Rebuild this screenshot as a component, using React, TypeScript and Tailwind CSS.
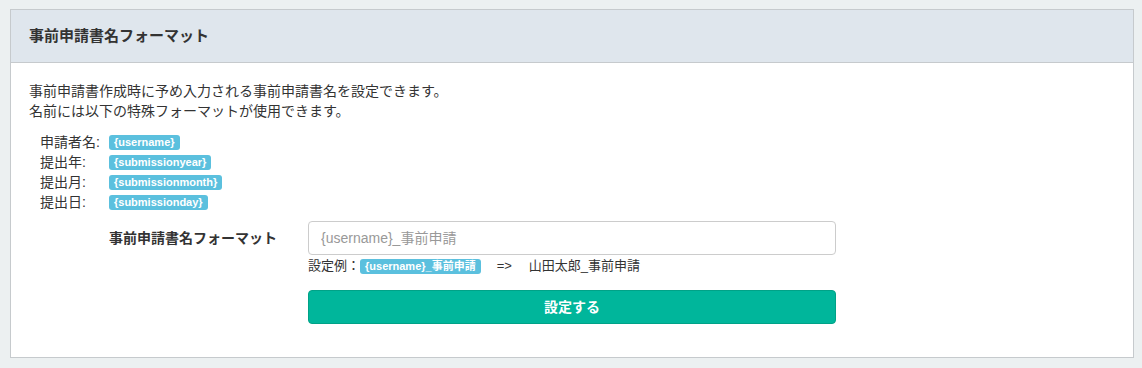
const font = "font-['Liberation_Sans','Noto_Sans_CJK_JP',sans-serif]";

const formats = [
  { label: "申請者名:", token: "{username}" },
  { label: "提出年:", token: "{submissionyear}" },
  { label: "提出月:", token: "{submissionmonth}" },
  { label: "提出日:", token: "{submissionday}" },
];

const Badge = ({ children }: { children: React.ReactNode }) => (
  <span className="inline-block rounded-[3px] bg-[#5bc0de] px-[5px] text-[11px] leading-[15px] font-bold text-white">
    {children}
  </span>
);

export default function App() {
  return (
    <div className={`${font} min-h-[368px] bg-[#ecf0f1] pt-[9px] pr-[8px] pb-[10px] pl-[10px] text-[14px] text-[#333]`}>
      <div className="border border-[#c6cacd] bg-white">
        {/* Header */}
        <div className="h-[53px] border-b border-[#c6cacd] bg-[#dfe6ed] px-[18px] flex items-center">
          <h2 className="text-[15px] font-bold text-[#333]">事前申請書名フォーマット</h2>
        </div>

        {/* Body */}
        <div className="px-[18px] pt-[18px] pb-[33px]">
          <p className="leading-[20px]">
            事前申請書作成時に予め入力される事前申請書名を設定できます。
            <br />
            名前には以下の特殊フォーマットが使用できます。
          </p>

          <div className="mt-[11px] pl-[11px]">
            {formats.map((f) => (
              <div key={f.token} className="flex items-center h-[20px]">
                <span className="w-[69px] text-[14px]">{f.label}</span>
                <Badge>{f.token}</Badge>
              </div>
            ))}
          </div>

          <div className="mt-[9px] flex">
            <label className="w-[279px] pr-[31px] pt-[7px] text-right text-[14px] font-bold leading-[20px]">
              事前申請書名フォーマット
            </label>
            <div className="w-[528px]">
              <input
                type="text"
                placeholder="{username}_事前申請"
                className="h-[34px] w-full rounded-[4px] border border-[#ccc] px-[12px] text-[14px] placeholder:text-[#999] outline-none"
              />
              <div className="mt-[1px] flex items-center h-[20px] text-[13px]">
                <span>設定例：</span>
                <Badge>{"{username}_事前申請"}</Badge>
                <span className="ml-[16px]">=&gt;</span>
                <span className="ml-[17px]">山田太郎_事前申請</span>
              </div>
              <button className="mt-[14px] h-[34px] w-full rounded-[4px] border border-[#00a287] bg-[#00b69b] text-[14px] font-bold text-white">
                設定する
              </button>
            </div>
          </div>
        </div>
      </div>
    </div>
  );
}
